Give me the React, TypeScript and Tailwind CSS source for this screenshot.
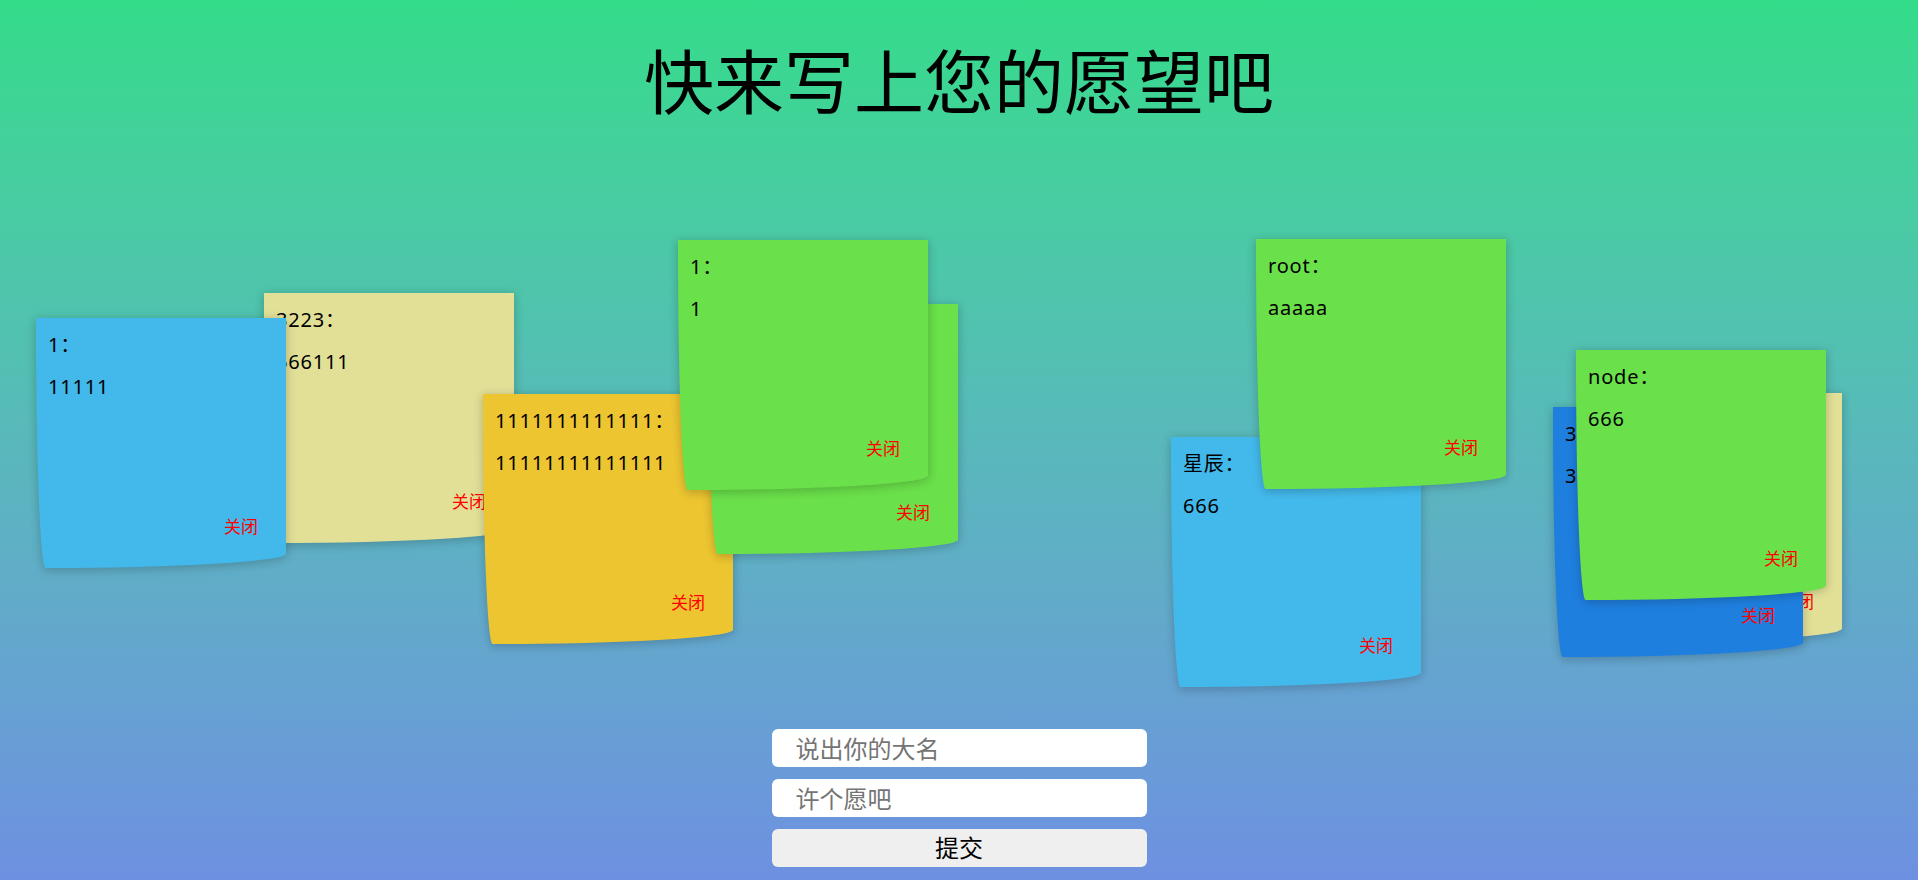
import React from "react";

type Wish = {
  id: number;
  name: string;
  text: string;
  color: string;
  left: number;
  top: number;
};

// positions on the wall are the content itself, order = stacking order
const wishes: Wish[] = [
  { id: 1, name: "3223", text: "666111", color: "bg-[#e2e097]", left: 264, top: 179 },
  { id: 2, name: "1", text: "11111", color: "bg-[#43b9eb]", left: 36, top: 204 },
  { id: 3, name: "1111111111111", text: "11111111111111", color: "bg-[#ecc531]", left: 483, top: 280 },
  { id: 4, name: "2", text: "2", color: "bg-[#6ae04a]", left: 708, top: 190 },
  { id: 5, name: "1", text: "1", color: "bg-[#6ae04a]", left: 678, top: 126 },
  { id: 6, name: "星辰", text: "666", color: "bg-[#43b9eb]", left: 1171, top: 323 },
  { id: 7, name: "root", text: "aaaaa", color: "bg-[#6ae04a]", left: 1256, top: 125 },
  { id: 8, name: "3223", text: "666111", color: "bg-[#e2e097]", left: 1592, top: 279 },
  { id: 9, name: "3223", text: "3333", color: "bg-[#1f7fdf]", left: 1553, top: 293 },
  { id: 10, name: "node", text: "666", color: "bg-[#6ae04a]", left: 1576, top: 236 },
];

const font = { fontFamily: '"Noto Sans", "Noto Sans CJK SC", sans-serif' };

const WishCard = ({ wish }: { wish: Wish }) => (
  <div
    className={`absolute flex h-[250px] w-[250px] flex-col p-[12px] rounded-bl-[20px_500px] rounded-br-[500px_30px] shadow-[0_2px_10px_1px_rgba(0,0,0,0.2)] ${wish.color}`}
    style={{ left: wish.left, top: wish.top }}
  >
    <p className="text-[20px] leading-[30px] tracking-[0.8px] text-black">{wish.name}：</p>
    <p className="mt-[12px] text-[20px] leading-[30px] tracking-[0.8px] text-black">{wish.text}</p>
    <span className="mt-auto mb-[17px] mr-[16px] self-end cursor-pointer text-[17px] leading-[24px] text-[#ff0000]">
      关闭
    </span>
  </div>
);

const App = () => {
  return (
    <div
      className="flex h-[880px] w-full flex-col overflow-hidden bg-gradient-to-b from-[#33dc89] to-[#6e90e1]"
      style={font}
    >
      {/* Title */}
      <h1 className="pt-[51px] text-center text-[70px] leading-[63px] font-normal text-black">
        快来写上您的愿望吧
      </h1>

      {/* Wish wall */}
      <div className="relative flex-1">
        {wishes.map((w) => (
          <WishCard key={w.id} wish={w} />
        ))}
      </div>

      {/* Form */}
      <div className="flex flex-col items-center gap-[12px] pb-[13px]">
        <input
          className="h-[38px] w-[375px] rounded-[6px] bg-white pl-[24px] text-[24px] text-black outline-none placeholder:text-[#757575]"
          placeholder="说出你的大名"
        />
        <input
          className="h-[38px] w-[375px] rounded-[6px] bg-white pl-[24px] text-[24px] text-black outline-none placeholder:text-[#757575]"
          placeholder="许个愿吧"
        />
        <button className="h-[38px] w-[375px] rounded-[6px] bg-[#efefef] text-[24px] text-black">
          提交
        </button>
      </div>
    </div>
  );
};

export default App;
